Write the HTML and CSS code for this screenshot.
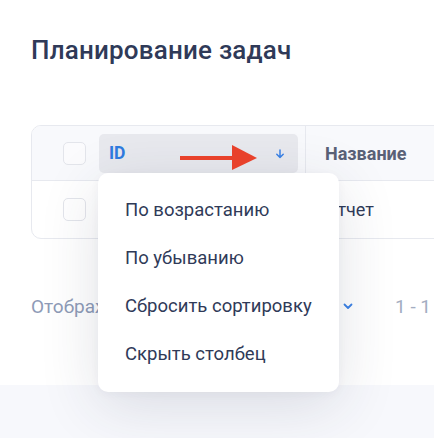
FILE: index.html
```html
<!DOCTYPE html>
<html lang="ru">
<head>
<meta charset="utf-8">
<link rel="stylesheet" href="styles.css">
</head>
<body>
<div class="page">
  <div class="main">
    <h1 class="title">Планирование задач</h1>
    <div class="table">
      <div class="row head">
        <div class="cell check"><span class="box"></span></div>
        <div class="cell id">
          <div class="sorted"><span class="id-label">ID</span>
            <svg class="sort-icon" width="10" height="10" viewBox="0 0 10 10"><path d="M5 1v7.5M1.8 5.3L5 8.5l3.2-3.2" fill="none" stroke="#3b82e6" stroke-width="1.5" stroke-linecap="round" stroke-linejoin="round"/></svg>
          </div>
        </div>
        <div class="cell name">Название</div>
      </div>
      <div class="row">
        <div class="cell check"><span class="box"></span></div>
        <div class="cell id"></div>
        <div class="cell name body">Отчет</div>
      </div>
    </div>
    <div class="pager">
      <span class="show">Отображать</span>
      <span class="per">
        <svg width="10" height="7" viewBox="0 0 10 7"><path d="M1.5 1.5L5 5l3.5-3.5" fill="none" stroke="#3b82e6" stroke-width="1.8" stroke-linecap="round" stroke-linejoin="round"/></svg>
      </span>
      <span class="range">1 - 1</span>
    </div>
  </div>
  <div class="footer"></div>

  <ul class="menu">
    <li>По возрастанию</li>
    <li>По убыванию</li>
    <li>Сбросить сортировку</li>
    <li>Скрыть столбец</li>
  </ul>

  <svg class="annot" width="90" height="30" viewBox="0 0 90 30">
    <rect x="0" y="12" width="56" height="4" fill="#e8412b"/>
    <polygon points="52,1 77,14 52,26" fill="#e8412b"/>
  </svg>
</div>
</body>
</html>
```

FILE: styles.css
```css
* { box-sizing: border-box; }
html, body { margin: 0; padding: 0; }
body {
  width: 434px;
  height: 438px;
  overflow: hidden;
  background: #ffffff;
  font-family: Roboto, "Noto Sans", sans-serif;
  color: #2f3a58;
}
.page {
  position: relative;
  width: 434px;
  height: 438px;
  display: flex;
  flex-direction: column;
}
.main {
  padding: 31px 0 0 31px;
  height: 385px;
  flex: none;
}
.title {
  margin: 0;
  font-size: 26px;
  font-weight: 500;
  line-height: 38px;
  color: #2f3a58;
  letter-spacing: 0.2px;
}
.table {
  margin-top: 56px;
  width: 620px;
  border: 1px solid #e7e9ef;
  border-radius: 10px;
  overflow: hidden;
}
.row {
  display: flex;
  height: 57px;
  align-items: center;
}
.row.head {
  height: 55px;
  background: #f8f9fc;
  border-bottom: 1px solid #e7e9ef;
}
.cell { height: 100%; display: flex; align-items: center; }
.check { width: 67px; padding-left: 31px; }
.box {
  width: 23px;
  height: 23px;
  border: 1px solid #e3e5eb;
  border-radius: 5px;
  background: #fff;
}
.head .box { background: #fbfbfd; }
.id { width: 207px; padding-right: 7px; }
.head .id { border-right: 1px solid #e7e9ef; }
.sorted {
  width: 200px;
  height: 39px;
  background: #e8e9ee;
  border-radius: 5px;
  display: flex;
  align-items: center;
  justify-content: space-between;
  padding: 0 13px 0 10px;
}
.id-label {
  font-size: 17.5px;
  font-weight: 700;
  color: #2f7be0;
}
.sort-icon { margin-top: 1px; }
.name {
  padding-left: 19px;
  font-size: 18px;
  font-weight: 700;
  color: #5a6177;
}
.name.body {
  font-weight: 400;
  color: #2f3a58;
}
.pager {
  display: flex;
  align-items: center;
  margin-top: 56px;
  font-size: 19px;
  color: #8e9bb7;
  white-space: nowrap;
}
.show { width: 312px; }
.per {
  display: flex;
  align-items: center;
}
.range { margin-left: 42px; color: #a3adc2; }
.footer {
  flex: 1;
  background: #f7f8fc;
}
.menu {
  position: absolute;
  left: 98px;
  top: 173px;
  width: 241px;
  margin: 0;
  padding: 13px 0 14px;
  list-style: none;
  background: #fff;
  border-radius: 10px;
  box-shadow: 0 14px 60px rgba(40, 50, 80, 0.14), 0 2px 10px rgba(40, 50, 80, 0.04);
}
.menu li {
  height: 48px;
  display: flex;
  align-items: center;
  padding-left: 27px;
  font-size: 18.5px;
  color: #2f3a58;
}
.annot {
  position: absolute;
  left: 180px;
  top: 144px;
}
```
